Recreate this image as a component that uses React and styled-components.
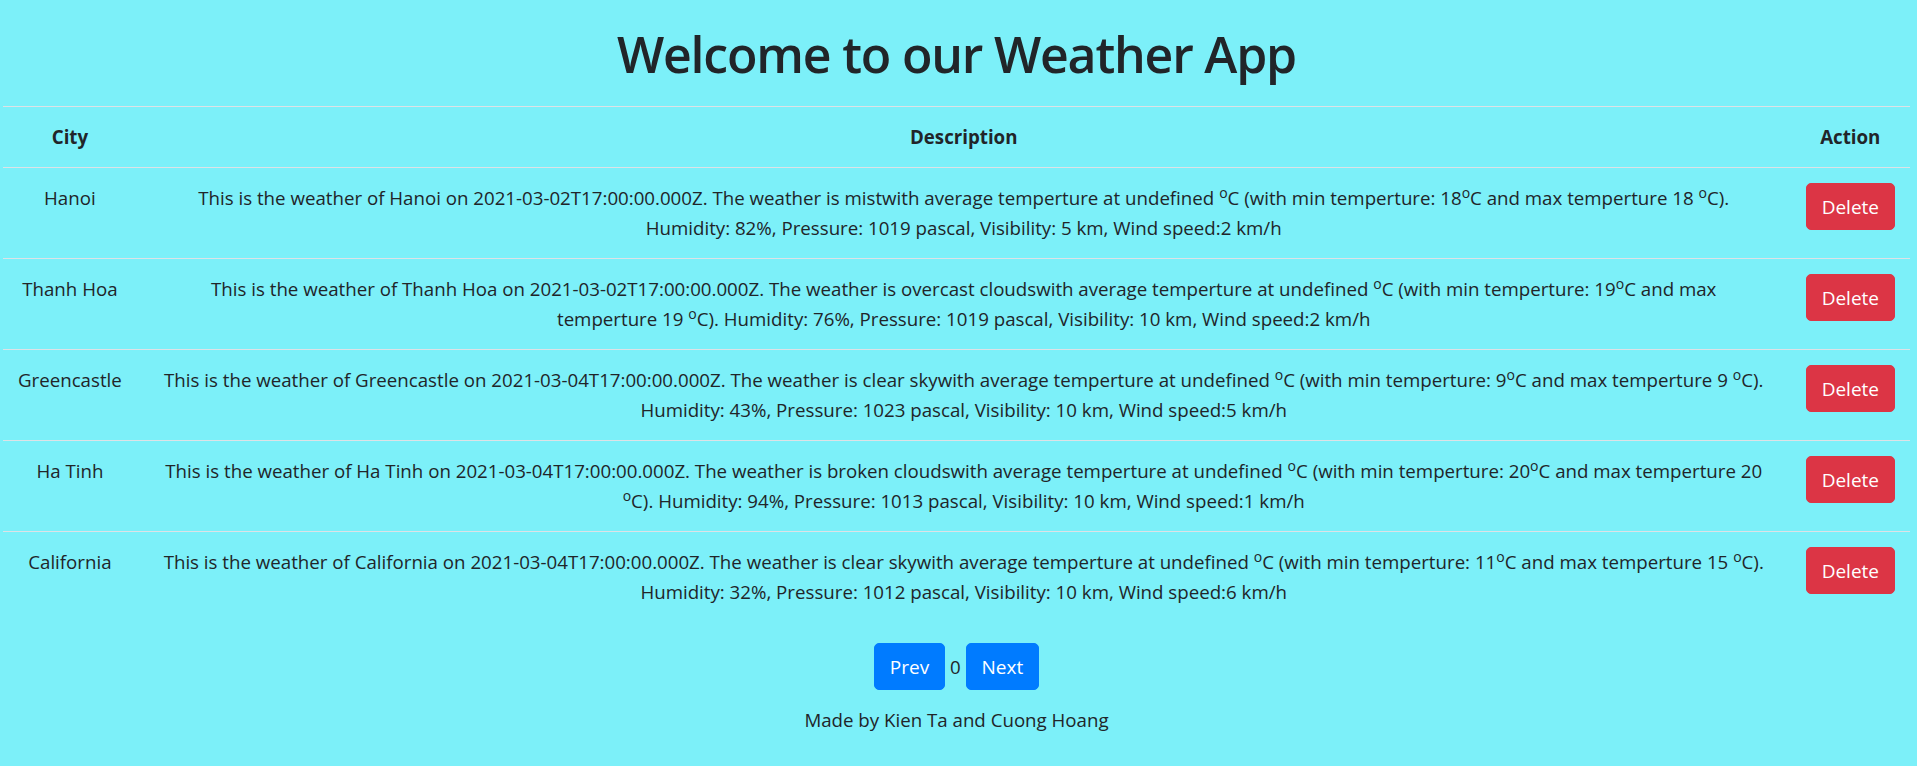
import React, { useState } from 'react'
import styled, { createGlobalStyle } from 'styled-components'

const weathers = [
  {
    city: 'Hanoi',
    date: '2021-03-02T17:00:00.000Z',
    desc: 'mist',
    min: 18,
    max: 18,
    humidity: 82,
    pressure: 1019,
    visibility: 5,
    wind: 2,
  },
  {
    city: 'Thanh Hoa',
    date: '2021-03-02T17:00:00.000Z',
    desc: 'overcast clouds',
    min: 19,
    max: 19,
    humidity: 76,
    pressure: 1019,
    visibility: 10,
    wind: 2,
  },
  {
    city: 'Greencastle',
    date: '2021-03-04T17:00:00.000Z',
    desc: 'clear sky',
    min: 9,
    max: 9,
    humidity: 43,
    pressure: 1023,
    visibility: 10,
    wind: 5,
  },
  {
    city: 'Ha Tinh',
    date: '2021-03-04T17:00:00.000Z',
    desc: 'broken clouds',
    min: 20,
    max: 20,
    humidity: 94,
    pressure: 1013,
    visibility: 10,
    wind: 1,
  },
  {
    city: 'California',
    date: '2021-03-04T17:00:00.000Z',
    desc: 'clear sky',
    min: 11,
    max: 15,
    humidity: 32,
    pressure: 1012,
    visibility: 10,
    wind: 6,
  },
]

const App = () => {
  const [data, setData] = useState(weathers)
  const [page, setPage] = useState(0)

  const remove = (city) => setData(data.filter((w) => w.city !== city))

  return (
    <Wrapper>
      <GlobalStyle />
      <Titulo>Welcome to our Weather App</Titulo>
      <Table>
        <thead>
          <tr>
            <Th>City</Th>
            <Th>Description</Th>
            <Th>Action</Th>
          </tr>
        </thead>
        <tbody>
          {data.map((w) => (
            <tr key={w.city}>
              <Td>{w.city}</Td>
              <DescTd>
                This is the weather of {w.city} on {w.date}. The weather is {w.desc}with average
                temperture at undefined <sup>o</sup>C (with min temperture: {w.min}
                <sup>o</sup>C and max temperture {w.max} <sup>o</sup>C). Humidity: {w.humidity}%,
                Pressure: {w.pressure} pascal, Visibility: {w.visibility} km, Wind speed:{w.wind}{' '}
                km/h
              </DescTd>
              <Td>
                <Button variant="danger" onClick={() => remove(w.city)}>
                  Delete
                </Button>
              </Td>
            </tr>
          ))}
        </tbody>
      </Table>
      <Pager>
        <Button onClick={() => setPage(page - 1)}>Prev</Button> {page}{' '}
        <Button onClick={() => setPage(page + 1)}>Next</Button>
      </Pager>
      <Footer>Made by Kien Ta and Cuong Hoang</Footer>
    </Wrapper>
  )
}

export default App

const GlobalStyle = createGlobalStyle`
  body {
    margin: 0;
    background-color: #7cf0f9;
    color: #212529;
    font-family: "Open Sans", "Noto Sans", Arial, sans-serif;
    font-size: 18.7px;
    line-height: 30px;
  }
`

const Wrapper = styled.main`
  width: 1907px;
  padding: 0 7px 0 3px;
  text-align: center;
`

const Titulo = styled.h1`
  margin: 0;
  padding: 24px 0 22px;
  font-size: 50px;
  font-weight: 600;
  letter-spacing: -1.2px;
  line-height: 60px;
`

const Table = styled.table`
  width: 100%;
  border-collapse: collapse;
`

const Th = styled.th`
  padding: 15px;
  border-top: 1px solid #dee2e6;
  font-weight: 700;
  vertical-align: bottom;
`

const Td = styled.td`
  padding: 15px;
  border-top: 1px solid #dee2e6;
  vertical-align: top;
`

const DescTd = styled(Td)`
  padding: 15px 22px;

  sup {
    font-size: 75%;
    line-height: 0;
    position: relative;
    vertical-align: baseline;
    top: -0.5em;
  }
`

const Button = styled.button`
  font-family: inherit;
  font-size: 19px;
  line-height: 30px;
  padding: 7.5px 15px;
  border: 1px solid ${(p) => (p.variant === 'danger' ? '#dc3545' : '#007bff')};
  border-radius: 5px;
  color: #fff;
  background-color: ${(p) => (p.variant === 'danger' ? '#dc3545' : '#007bff')};
  cursor: pointer;
`

const Pager = styled.div`
  margin-top: 21px;
`

const Footer = styled.p`
  margin: 15px 0 0;
`
